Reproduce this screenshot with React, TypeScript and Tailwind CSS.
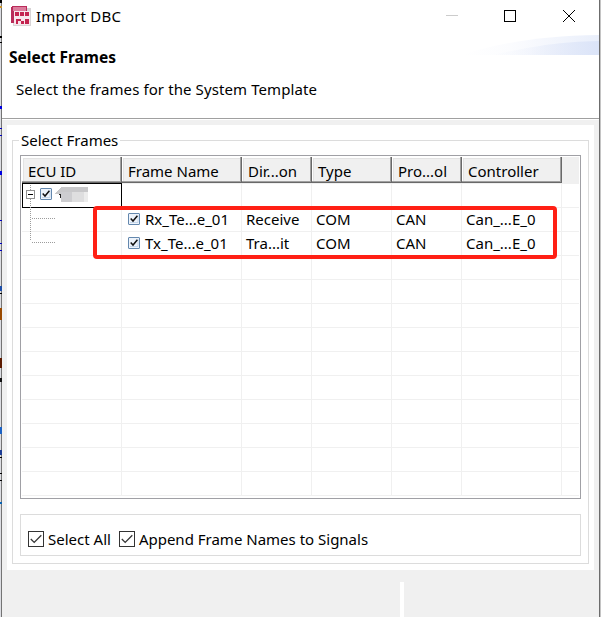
import clsx from 'clsx'

const columns = [
  { label: 'ECU ID', width: 'w-[100px]', track: '-tracking-[0.1px]' },
  { label: 'Frame Name', width: 'w-[120px]', track: '' },
  { label: 'Dir...on', width: 'w-[70px]', track: '' },
  { label: 'Type', width: 'w-[80px]', track: '' },
  { label: 'Pro...ol', width: 'w-[70px]', track: '' },
  { label: 'Controller', width: 'w-[100px]', track: '' },
]

const frames = [
  ['Rx_Te...e_01', 'Receive', 'COM', 'CAN', 'Can_...E_0'],
  ['Tx_Te...e_01', 'Tra...it', 'COM', 'CAN', 'Can_...E_0'],
]

// Slivers of the editor that show along the dialog's left edge
const editorMarks = [
  { y: 0, h: 3, color: '#000000' },
  { y: 6, h: 2, color: '#c8922a' },
  { y: 36, h: 2, color: '#000000' },
  { y: 42, h: 1, color: '#000000' },
  { y: 106, h: 3, color: '#0000e0' },
  { y: 128, h: 1, color: '#0000c0' },
  { y: 135, h: 1, color: '#0000c0' },
  { y: 171, h: 4, color: '#0000e0' },
  { y: 220, h: 1, color: '#0000c0' },
  { y: 243, h: 1, color: '#0000c0' },
  { y: 250, h: 1, color: '#0000c0' },
  { y: 286, h: 5, color: '#1d4fa8' },
  { y: 293, h: 1, color: '#000000' },
  { y: 308, h: 12, color: '#9a4a00' },
  { y: 358, h: 10, color: '#5c1a00' },
  { y: 378, h: 4, color: '#111111' },
  { y: 427, h: 7, color: '#1c62c4' },
  { y: 450, h: 5, color: '#1c3c94' },
  { y: 457, h: 1, color: '#000000' },
  { y: 473, h: 1, color: '#000000' },
  { y: 480, h: 1, color: '#000000' },
  { y: 502, h: 2, color: '#0a64b4' },
]

function AppIcon() {
  return (
    <svg width="20" height="20" viewBox="0 0 20 20" shapeRendering="crispEdges">
      <rect x="2" y="2" width="18" height="18" fill="#d8d4d6" />
      <rect x="0" y="0" width="16" height="17" rx="2" fill="#b92c5a" />
      <rect x="2" y="1" width="13" height="4" fill="#dc7c9c" />
      <rect x="3" y="5" width="16" height="14" fill="#f7e6ec" />
      <path d="M4 6h4v4H4zM9 6h4v4H9zM14 6h4v4h-4zM5 13h5v2H7v3H5zM10 15h3v3h-3zM14 13h4v5h-4z" fill="#c4234f" />
    </svg>
  )
}

function TreeCheck() {
  return (
    <svg width="12" height="12" viewBox="0 0 12 12" className="shrink-0">
      <rect x="0.5" y="0.5" width="11" height="11" rx="0.5" fill="#edf3fb" stroke="#6488ae" />
      <path d="M2 9.5h8V2" fill="none" stroke="#c6d7eb" />
      <path d="M2.7 5.5 5 8 9.4 2.8" fill="none" stroke="#111" strokeWidth="1.5" />
    </svg>
  )
}

function OptionCheck({ label, className }: { label: string; className: string }) {
  return (
    <label className="flex items-center">
      <svg width="16" height="16" viewBox="0 0 16 16" className="shrink-0">
        <rect x="0.5" y="0.5" width="15" height="15" fill="#fff" stroke="#333" />
        <path d="M2.8 8 6.2 11.4 13.3 4.3" fill="none" stroke="#333" strokeWidth="1.3" />
      </svg>
      <span className={clsx('ml-1 whitespace-nowrap', className)}>{label}</span>
    </label>
  )
}

function TitleBar() {
  return (
    <div className="flex h-[35px] shrink-0 items-start">
      <div className="ml-[9px] mt-[6px]"><AppIcon /></div>
      <h1 className="ml-[5px] mt-[6px] leading-5 tracking-[0.2px]">Import DBC</h1>
      <svg className="ml-auto mr-[22px] mt-[9px]" width="132" height="14" viewBox="0 0 132 14">
        <path d="M1 6.5h12" stroke="#ccc" />
        <rect x="59.5" y="1.5" width="11" height="11" fill="none" stroke="#000" />
        <path d="M118 1l12 12M130 1l-12 12" stroke="#000" />
      </svg>
    </div>
  )
}

function Banner() {
  return (
    <header className="relative h-[85px] shrink-0 border-b border-white">
      <svg className="absolute right-0 top-0" width="147" height="20" viewBox="0 0 147 20">
        <defs>
          <linearGradient id="swoosh">
            <stop offset="0" stopColor="#dfe6f8" stopOpacity="0" />
            <stop offset="0.35" stopColor="#dfe6f8" stopOpacity="0.2" />
            <stop offset="1" stopColor="#dbe4f8" />
          </linearGradient>
        </defs>
        <path d="M10 20C50 7 90 1 147 0V20Z" fill="url(#swoosh)" opacity="0.6" />
        <path d="M40 20C75 13 100 7 147 6V20Z" fill="url(#swoosh)" />
      </svg>
      <div className="h-[84px] border-b border-[#a0a0a0]">
        <h2 className="ml-[7px] pt-[12px] text-[15.5px] font-bold leading-5">Select Frames</h2>
        <p className="ml-[14px] mt-[12px] leading-5 tracking-[0.1px]">Select the frames for the System Template</p>
      </div>
    </header>
  )
}

function FrameTable() {
  return (
    <div className="relative h-[344px] border border-[#a0a0a5] p-px">
      <div className="flex h-[27px] bg-[#f0f0f0] pb-px">
        {columns.map((c) => (
          <div
            key={c.label}
            className={clsx(
              c.width,
              'h-[26px] shrink-0 border-b border-r border-[#696969] shadow-[inset_-1px_-1px_0_#a0a0a0,inset_1px_1px_0_#fff,inset_2px_2px_0_#e3e3e3] pl-[6px] pt-1 leading-5 whitespace-nowrap',
              c.track,
            )}
          >
            {c.label}
          </div>
        ))}
      </div>

      {Array.from({ length: 13 }, (_, row) => (
        <div key={row} className="flex h-6 border-b border-[#f0f0f0]">
          {columns.map((c, col) => (
            <div key={c.label} className={clsx(c.width, 'flex h-6 shrink-0 items-start border-r border-[#f0f0f0] leading-[22px] whitespace-nowrap')}>
              {(row === 1 || row === 2) && col > 0 && (
                <>
                  {col === 1 && <span className="ml-[6px] mr-[5px] mt-[5px]"><TreeCheck /></span>}
                  <span className={col === 1 ? '' : 'pl-1'}>{frames[row - 1][col - 1]}</span>
                </>
              )}
            </div>
          ))}
        </div>
      ))}

      <div className="absolute left-px top-[27px] h-[25px] w-[100px] border border-black" />
      <svg className="absolute left-px top-[27px]" width="72" height="62" viewBox="0 0 72 62" shapeRendering="crispEdges">
        <path d="M8.5 2v56M10 35.500h23M10 59.500h23" stroke="#9c9c9c" strokeDasharray="1 1" />
        <rect x="4.500" y="7.500" width="8" height="8" fill="#fff" stroke="#919191" />
        <path d="M6 11.500h5" stroke="#000" />
        <path d="M32 11 39 4h27v5H39v2Z" fill="#c8c8ca" />
        <path d="M37 11h2v5z" fill="#222" />
        <path d="M39 9h11v10H39z" fill="#cdcdd0" />
        <path d="M50 9h12v10H50z" fill="#dededf" />
        <path d="M62 9h4v10h-4z" fill="#ececec" />
      </svg>
      <div className="absolute left-[19px] top-[32px]"><TreeCheck /></div>
      <div className="absolute left-[72px] top-[50px] h-[53px] w-[464px] rounded-[4px] border-4 border-[#ff2015]" />
    </div>
  )
}

export default function App() {
  return (
    <div className="flex h-[619px] w-[614px] overflow-hidden bg-white pb-[2px] font-['Noto_Sans','Liberation_Sans',sans-serif] text-[15px] text-black">
      <div className="relative w-[2px] shrink-0 border-r border-[#747474] bg-[#dcdde2]">
        {editorMarks.map((m) => (
          <i key={m.y} className="absolute left-0 w-[2px]" style={{ top: m.y, height: m.h, background: m.color }} />
        ))}
      </div>

      <div className="flex w-[597px] shrink-0 flex-col bg-[#f0f0f0]">
        <div className="flex flex-col bg-white">
          <TitleBar />
          <Banner />
        </div>
        <main className="mx-[5px] mt-[5px] h-[445px] bg-white px-[5px] pt-[15px]">
          <fieldset className="relative h-[424px] border border-[#dcdcdc] px-[7px] pt-[14px]">
            <span className="absolute -top-[11px] left-[6px] bg-white px-[2px] leading-5">Select Frames</span>
            <FrameTable />
            <div className="mt-[15px] flex h-[42px] items-center gap-2 border border-[#dcdcdc] pl-[7px] pt-2">
              <OptionCheck label="Select All" className="" />
              <OptionCheck label="Append Frame Names to Signals" className="" />
            </div>
          </fieldset>
        </main>
        <div className="ml-[398px] mt-3 h-[35px] w-1 bg-white" />
      </div>
      <div className="w-[2px] shrink-0 border-l border-[#6c6c6c] bg-[#c4c4c4]" />
    </div>
  )
}
